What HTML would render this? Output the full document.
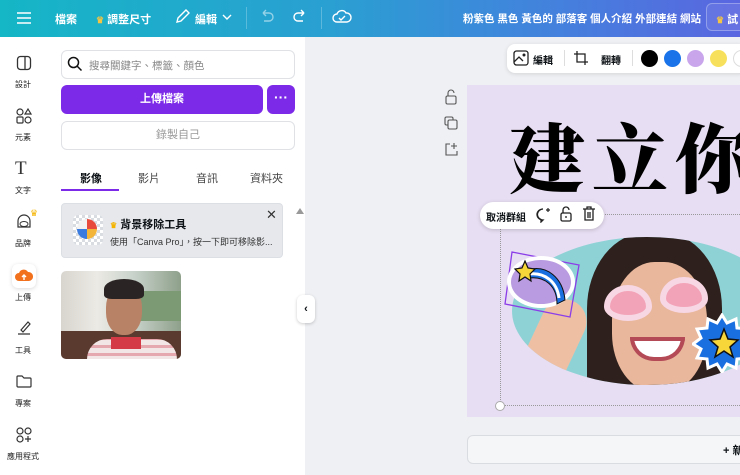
<!DOCTYPE html>
<html><head><meta charset="utf-8"><style>
*{box-sizing:border-box;margin:0;padding:0}
body{width:740px;height:475px;overflow:hidden;position:relative;font-family:"Liberation Sans","Noto Sans CJK TC",sans-serif;background:#fff;color:#0d1216}
.a{position:absolute;white-space:nowrap}
.hdr{left:0;top:0;width:740px;height:37px;background:linear-gradient(90deg,#15b6c6 0%,#2a9fd2 45%,#3f86dc 70%,#5a66e0 100%)}
.ht{color:#fff;font-size:11px;font-weight:bold;top:11px}
.rail{left:0;top:37px;width:46px;height:438px;background:#fff}
.ri{width:46px;text-align:center;font-size:8px;color:#222}
.panel{left:46px;top:37px;width:259px;height:438px;background:#fff}
.canvasbg{left:305px;top:37px;width:435px;height:438px;background:#eef0f3}
</style></head><body>
<div class="a hdr"></div>
<svg class="a" style="left:15px;top:10px" width="18" height="16"><path d="M2 3h14M2 8h14M2 13h14" stroke="#fff" stroke-width="1.6"/></svg>
<div class="a ht" style="left:55px">檔案</div>
<div class="a ht" style="left:96px"><span style="color:#f4c542;font-size:9px">♛</span> 調整尺寸</div>
<svg class="a" style="left:174px;top:9px" width="16" height="16"><path d="M3 13l1-4 8-8 3 3-8 8z" fill="none" stroke="#fff" stroke-width="1.4"/></svg>
<div class="a ht" style="left:195px">編輯</div>
<svg class="a" style="left:221px;top:12px" width="12" height="10"><path d="M2 3l4 4 4-4" fill="none" stroke="#fff" stroke-width="1.4"/></svg>
<div class="a" style="left:246px;top:7px;width:1px;height:22px;background:rgba(255,255,255,.25)"></div>
<svg class="a" style="left:258px;top:9px" width="18" height="16"><path d="M5 4H11a4 4 0 010 8H6M5 4l3-3M5 4l3 3" fill="none" stroke="rgba(255,255,255,.5)" stroke-width="1.4"/></svg>
<svg class="a" style="left:291px;top:9px" width="18" height="16"><path d="M13 4H7a4 4 0 000 8h5M13 4l-3-3M13 4l-3 3" fill="none" stroke="#fff" stroke-width="1.4"/></svg>
<div class="a" style="left:321px;top:7px;width:1px;height:22px;background:rgba(255,255,255,.25)"></div>
<svg class="a" style="left:332px;top:8px" width="20" height="18"><path d="M5 14a4 4 0 010-8 5 5 0 019-1 4 4 0 011 9z" fill="none" stroke="#fff" stroke-width="1.4"/><path d="M7 10l2 2 4-4" fill="none" stroke="#fff" stroke-width="1.4"/></svg>
<div class="a ht" style="left:463px;font-size:10.5px">粉紫色 黑色 黃色的 部落客 個人介紹 外部連結 網站</div>
<div class="a" style="left:706px;top:3px;width:40px;height:28px;border:1px solid rgba(255,255,255,.3);border-radius:6px;background:rgba(255,255,255,.08)"></div>
<div class="a ht" style="left:716px"><span style="color:#f4c542;font-size:9px">♛</span> 試</div>

<div class="a rail"></div>
<svg class="a" style="left:16px;top:55px" width="16" height="16"><rect x="1.5" y="1.5" width="13" height="13" rx="3" fill="none" stroke="#333" stroke-width="1.3"/><path d="M9 1.5v13" stroke="#333" stroke-width="1.3"/></svg>
<div class="a ri" style="left:0;top:79px">設計</div>
<svg class="a" style="left:15px;top:107px" width="18" height="18"><circle cx="5" cy="5" r="3" fill="none" stroke="#333" stroke-width="1.2"/><path d="M13 2l3 5h-6z" fill="none" stroke="#333" stroke-width="1.2"/><rect x="2" y="10" width="6" height="6" rx="1" fill="none" stroke="#333" stroke-width="1.2"/><circle cx="13" cy="13" r="3" fill="none" stroke="#333" stroke-width="1.2"/></svg>
<div class="a ri" style="left:0;top:132px">元素</div>
<div class="a" style="left:15px;top:158px;font-family:'Liberation Serif',serif;font-size:19px;color:#333">T</div>
<div class="a ri" style="left:0;top:185px">文字</div>
<svg class="a" style="left:15px;top:213px" width="18" height="18"><path d="M3 8a6 6 0 0112 0v6H3z" fill="none" stroke="#333" stroke-width="1.2"/><ellipse cx="9" cy="11" rx="4" ry="2.5" fill="none" stroke="#333" stroke-width="1"/></svg>
<div class="a" style="left:30px;top:208px;color:#f4b400;font-size:9px">♛</div>
<div class="a ri" style="left:0;top:238px">品牌</div>
<div class="a" style="left:12px;top:264px;width:24px;height:24px;border-radius:6px;background:#fff;box-shadow:0 1px 4px rgba(0,0,0,.15)"></div>
<svg class="a" style="left:15px;top:268px" width="18" height="16"><path d="M4 13a4 4 0 010-8 5 5 0 019-1 4 4 0 011 9z" fill="#f2711c"/><path d="M9 12V7M7 9l2-2 2 2" stroke="#fff" stroke-width="1.4" fill="none"/></svg>
<div class="a ri" style="left:0;top:292px">上傳</div>
<svg class="a" style="left:15px;top:319px" width="18" height="18"><path d="M6 11l7-8 2 2-7 8z M3 15h12" fill="none" stroke="#333" stroke-width="1.2"/></svg>
<div class="a ri" style="left:0;top:345px">工具</div>
<svg class="a" style="left:15px;top:373px" width="18" height="16"><path d="M2 4a1 1 0 011-1h4l2 2h6a1 1 0 011 1v7a1 1 0 01-1 1H3a1 1 0 01-1-1z" fill="none" stroke="#333" stroke-width="1.2"/></svg>
<div class="a ri" style="left:0;top:398px">專案</div>
<svg class="a" style="left:15px;top:426px" width="18" height="18"><circle cx="5" cy="5" r="3" fill="none" stroke="#333" stroke-width="1.2"/><circle cx="13" cy="5" r="3" fill="none" stroke="#333" stroke-width="1.2"/><circle cx="5" cy="13" r="3" fill="none" stroke="#333" stroke-width="1.2"/><path d="M13 10v6M10 13h6" stroke="#333" stroke-width="1.2"/></svg>
<div class="a ri" style="left:0;top:451px">應用程式</div>

<div class="a panel"></div>
<div class="a" style="left:61px;top:50px;width:234px;height:29px;border:1px solid #dfe1e5;border-radius:6px"></div>
<svg class="a" style="left:67px;top:56px" width="16" height="16"><circle cx="6.5" cy="6.5" r="5" fill="none" stroke="#111" stroke-width="1.5"/><path d="M10 10l4.5 4.5" stroke="#111" stroke-width="1.5"/></svg>
<div class="a" style="left:89px;top:58px;font-size:10.5px;color:#888">搜尋關鍵字、標籤、顏色</div>
<div class="a" style="left:61px;top:85px;width:202px;height:29px;background:#7d2ae8;border-radius:6px;color:#fff;font-size:11px;font-weight:bold;text-align:center;line-height:29px">上傳檔案</div>
<div class="a" style="left:267px;top:85px;width:28px;height:29px;background:#7d2ae8;border-radius:6px;color:#fff;font-size:14px;font-weight:bold;text-align:center;line-height:24px">···</div>
<div class="a" style="left:61px;top:121px;width:234px;height:29px;border:1px solid #dfe1e5;border-radius:6px;color:#999;font-size:11px;text-align:center;line-height:27px">錄製自己</div>
<div class="a" style="left:80px;top:170px;font-size:11px;font-weight:bold">影像</div>
<div class="a" style="left:61px;top:189px;width:58px;height:2px;background:#7d2ae8"></div>
<div class="a" style="left:138px;top:170px;font-size:11px;color:#444">影片</div>
<div class="a" style="left:196px;top:170px;font-size:11px;color:#444">音訊</div>
<div class="a" style="left:250px;top:170px;font-size:11px;color:#444">資料夾</div>
<div class="a" style="left:61px;top:203px;width:222px;height:55px;background:#e6e8ec;border:1px solid #dcdfe3;border-radius:4px"></div>
<div class="a" style="left:73px;top:215px;width:30px;height:30px;border-radius:5px;background:repeating-conic-gradient(#d9dde2 0 25%,#fff 0 50%) 0 0/6px 6px"></div>
<div class="a" style="left:77px;top:219px;width:20px;height:20px;border-radius:50%;background:conic-gradient(#e84b3c 0 25%,#f3b53a 0 50%,#3a7be0 0 75%,#f2f2f2 0)"></div>
<div class="a" style="left:110px;top:216px;font-size:11px;font-weight:bold"><span style="color:#f4b400;font-size:8px">♛</span> 背景移除工具</div>
<div class="a" style="left:110px;top:235px;font-size:9px;color:#333">使用「Canva Pro」，按一下即可移除影...</div>
<div class="a" style="left:266px;top:207px;font-size:13px;color:#333">✕</div>
<div class="a" style="left:296px;top:208px;width:0;height:0;border-left:4px solid transparent;border-right:4px solid transparent;border-bottom:6px solid #999"></div>
<div class="a" style="left:61px;top:271px;width:120px;height:88px;border-radius:5px;overflow:hidden;background:linear-gradient(90deg,#d8d5cf 0%,#eceae4 30%,#c9d3cc 60%,#8ea08a 100%)">
 <div class="a" style="left:0;top:60px;width:120px;height:28px;background:#5a3a2e"></div>
 <div class="a" style="left:70px;top:20px;width:50px;height:30px;background:#7c9a74"></div>
 <div class="a" style="left:26px;top:68px;width:90px;height:30px;border-radius:20px 20px 0 0;background:repeating-linear-gradient(0deg,#f3e6e6 0 5px,#e5a8ae 5px 8px)"></div>
 <div class="a" style="left:50px;top:66px;width:30px;height:12px;background:#d33a45"></div>
 <div class="a" style="left:45px;top:14px;width:36px;height:50px;border-radius:45%;background:#b88266"></div>
 <div class="a" style="left:43px;top:8px;width:40px;height:20px;border-radius:50% 50% 20% 20%;background:#2a2424"></div>
</div>
<div class="a" style="left:305px;top:37px;width:1px;height:438px;background:#e3e5e8"></div>

<div class="a canvasbg"></div>
<div class="a" style="left:297px;top:295px;width:18px;height:28px;background:#fff;border-radius:6px;box-shadow:0 1px 3px rgba(0,0,0,.2);font-size:11px;font-weight:bold;text-align:center;line-height:28px">‹</div>
<svg class="a" style="left:444px;top:89px" width="14" height="16"><rect x="2" y="7" width="10" height="8" rx="1.5" fill="none" stroke="#555" stroke-width="1.1"/><path d="M4 7V4a3 3 0 016 0" fill="none" stroke="#555" stroke-width="1.1"/></svg>
<svg class="a" style="left:444px;top:116px" width="14" height="14"><rect x="1" y="1" width="8" height="8" rx="1.5" fill="none" stroke="#555" stroke-width="1.1"/><rect x="4" y="4" width="9" height="9" rx="1.5" fill="#eef0f3" stroke="#555" stroke-width="1.1"/></svg>
<svg class="a" style="left:444px;top:142px" width="14" height="14"><path d="M6 2H2v11h11V9M10 1v6M7 4h6" fill="none" stroke="#555" stroke-width="1.1"/></svg>
<div class="a" style="left:467px;top:85px;width:273px;height:332px;background:#e8def3;overflow:hidden">
 <div class="a" style="left:42px;top:28px;font-family:'Noto Serif CJK SC',serif;font-weight:900;font-size:76px;letter-spacing:7px;line-height:84px;color:#000;white-space:nowrap">建立你</div>
 <div class="a" style="left:45px;top:152px;width:270px;height:148px;border-radius:50%;background:#8fd2d6;overflow:hidden">
  <div class="a" style="left:75px;top:-5px;width:135px;height:170px;border-radius:45% 45% 0 0;background:#2e211d"></div>
  <div class="a" style="left:100px;top:25px;width:95px;height:130px;border-radius:45%;background:#e9b79c"></div>
  <div class="a" style="left:118px;top:100px;width:55px;height:24px;border-radius:0 0 30px 30px;background:#fff;border:4px solid #b44a56"></div>
  <div class="a" style="left:92px;top:48px;width:48px;height:36px;border-radius:50% 50% 50% 50%/60% 60% 40% 40%;background:#f3a3b8;border:6px solid #f7d7e4"></div>
  <div class="a" style="left:148px;top:40px;width:48px;height:36px;border-radius:50% 50% 50% 50%/60% 60% 40% 40%;background:#f3a3b8;border:6px solid #f7d7e4"></div>
  <div class="a" style="left:20px;top:60px;width:45px;height:90px;border-radius:30px;background:#efbfa4;transform:rotate(25deg)"></div>
 </div>
 <svg class="a" style="left:225px;top:228px" width="60" height="60" viewBox="0 0 60 60"><path d="M30 2l5 8 9-4 1 9 10 1-4 9 8 6-8 5 4 9-10 1-1 9-9-4-5 8-5-8-9 4-1-9-10-1 4-9-8-5 8-6-4-9 10-1 1-9 9 4z" fill="#1a6fe0" stroke="#fff" stroke-width="3"/><path d="M32 16l4 10 10 1-8 7 3 10-9-6-9 6 3-10-8-7 10-1z" fill="#f7d63a" stroke="#111" stroke-width="1.5"/></svg>
 <svg class="a" style="left:36px;top:163px" width="80" height="70" viewBox="0 0 80 70"><path d="M9 4l67 13-9 52L2 56z" fill="none" stroke="#8b3ee8" stroke-width="1.3"/><ellipse cx="38" cy="34" rx="34" ry="26" fill="#fff"/><ellipse cx="38" cy="34" rx="30" ry="22" fill="#b89be0"/><path d="M24 22c20-6 36 8 38 30l-8 4c0-18-12-28-28-26z" fill="#1a6fe0" stroke="#111"/><path d="M26 26c16-2 28 8 30 24" fill="none" stroke="#fff" stroke-width="3"/><path d="M22 13l3 7 7 1-5 5 1 7-6-4-6 4 1-7-5-5 7-1z" fill="#f7d63a" stroke="#111" stroke-width="1.2"/></svg>
 <div class="a" style="left:33px;top:129px;width:260px;height:192px;border:1px dotted #999"></div>
 <div class="a" style="left:28px;top:316px;width:10px;height:10px;border-radius:50%;background:#fff;border:1px solid #aaa"></div>
</div>
<div class="a" style="left:480px;top:202px;width:124px;height:27px;background:#fff;border-radius:14px;box-shadow:0 1px 4px rgba(0,0,0,.18)"></div>
<div class="a" style="left:486px;top:209px;font-size:10px;font-weight:bold">取消群組</div>
<svg class="a" style="left:535px;top:207px" width="16" height="16"><path d="M8 2a6 5.5 0 100 11l-2 2v-2.5A6 5.5 0 018 2z" fill="none" stroke="#222" stroke-width="1.3"/><path d="M13 1v4M11 3h4" stroke="#222" stroke-width="1.2"/></svg>
<svg class="a" style="left:559px;top:206px" width="14" height="16"><rect x="2" y="7" width="10" height="8" rx="1.5" fill="none" stroke="#222" stroke-width="1.3"/><path d="M4 7V4a3 3 0 016 0" fill="none" stroke="#222" stroke-width="1.3"/><path d="M7 10v2" stroke="#222" stroke-width="1.3"/></svg>
<svg class="a" style="left:582px;top:206px" width="14" height="16"><path d="M1 3h12M5 3V1h4v2M3 3v11h8V3M6 6v6M8 6v6" fill="none" stroke="#222" stroke-width="1.3"/></svg>
<div class="a" style="left:507px;top:44px;width:240px;height:29px;background:#fff;border-radius:8px;box-shadow:0 1px 4px rgba(0,0,0,.12)"></div>
<svg class="a" style="left:513px;top:50px" width="16" height="16"><rect x="1" y="1" width="14" height="14" rx="2.5" fill="none" stroke="#222" stroke-width="1.3"/><path d="M1 12l5-5 4 4" fill="none" stroke="#222" stroke-width="1.3"/><circle cx="11" cy="5" r="1.5" fill="#222"/></svg>
<div class="a" style="left:533px;top:52px;font-size:10px;font-weight:bold">編輯</div>
<div class="a" style="left:564px;top:50px;width:1px;height:16px;background:#ddd"></div>
<svg class="a" style="left:573px;top:50px" width="16" height="16"><path d="M4 1v11h11M1 4h11v11" fill="none" stroke="#222" stroke-width="1.3"/></svg>
<div class="a" style="left:601px;top:52px;font-size:10px;font-weight:bold">翻轉</div>
<div class="a" style="left:632px;top:50px;width:1px;height:16px;background:#ddd"></div>
<div class="a" style="left:641px;top:50px;width:17px;height:17px;border-radius:50%;background:#000"></div>
<div class="a" style="left:664px;top:50px;width:17px;height:17px;border-radius:50%;background:#1a73e8"></div>
<div class="a" style="left:687px;top:50px;width:17px;height:17px;border-radius:50%;background:#c9a6ec"></div>
<div class="a" style="left:710px;top:50px;width:17px;height:17px;border-radius:50%;background:#f7e15c"></div>
<div class="a" style="left:733px;top:50px;width:17px;height:17px;border-radius:50%;background:#fff;border:1px solid #ddd"></div>
<div class="a" style="left:467px;top:435px;width:290px;height:29px;background:#f5f6f8;border:1px solid #d9dce0;border-radius:6px"></div>
<div class="a" style="left:723px;top:442px;font-size:11px;font-weight:bold;white-space:nowrap">+ 新</div>
</body></html>
